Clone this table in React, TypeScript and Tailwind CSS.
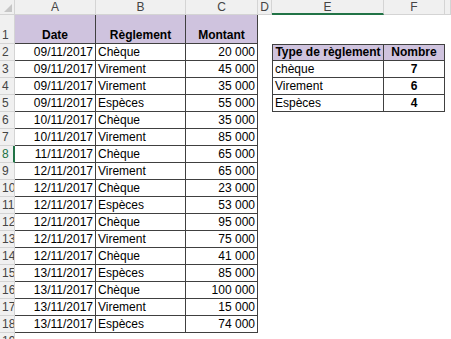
import React from "react";

const rows: [string, string, string][] = [
  ["09/11/2017", "Chèque", "20 000"],
  ["09/11/2017", "Virement", "45 000"],
  ["09/11/2017", "Virement", "35 000"],
  ["09/11/2017", "Espèces", "55 000"],
  ["10/11/2017", "Chèque", "35 000"],
  ["10/11/2017", "Virement", "85 000"],
  ["11/11/2017", "Chèque", "65 000"],
  ["12/11/2017", "Virement", "65 000"],
  ["12/11/2017", "Chèque", "23 000"],
  ["12/11/2017", "Espèces", "53 000"],
  ["12/11/2017", "Chèque", "95 000"],
  ["12/11/2017", "Virement", "75 000"],
  ["12/11/2017", "Chèque", "41 000"],
  ["13/11/2017", "Espèces", "85 000"],
  ["13/11/2017", "Chèque", "100 000"],
  ["13/11/2017", "Virement", "15 000"],
  ["13/11/2017", "Espèces", "74 000"],
];

const summary: [string, string][] = [
  ["chèque", "7"],
  ["Virement", "6"],
  ["Espèces", "4"],
];

const cols = ["A", "B", "C", "D", "E", "F", ""];

const hdr = "bg-[#f0f0f0] border-r border-b border-[#d4d4d4] text-[#444] text-[12px]";
const cell = "flex items-end pb-[1px] leading-[14px] whitespace-nowrap overflow-hidden";
const dark = "border-[#404040]";

function RowHead({ n }: { n: number }) {
  const active = n === 8;
  return (
    <div
      className={`${hdr} ${cell} pl-[2px] text-[11px] ${
        active ? "text-[#217346] border-r-2 border-r-[#217346]" : ""
      }`}
    >
      {n}
    </div>
  );
}

export default function App() {
  const body: React.ReactNode[] = [];

  for (let r = 1; r <= 18; r++) {
    body.push(<RowHead key={`h${r}`} n={r} />);

    // A..C
    if (r === 1) {
      ["Date", "Règlement", "Montant"].forEach((t) =>
        body.push(
          <div
            key={`t${t}`}
            className={`${cell} justify-center items-center pt-[4px] bg-[#cfc3de] font-bold border-r border-b ${dark}`}
          >
            {t}
          </div>
        )
      );
    } else {
      const [d, m, v] = rows[r - 2];
      body.push(
        <div key={`a${r}`} className={`${cell} justify-end pr-[2px] border-r border-b ${dark}`}>
          {d}
        </div>,
        <div key={`b${r}`} className={`${cell} pl-[2px] border-r border-b ${dark}`}>
          {m}
        </div>,
        <div key={`c${r}`} className={`${cell} justify-end pr-[2px] border-r border-b ${dark}`}>
          {v}
        </div>
      );
    }

    // D
    body.push(<div key={`d${r}`} />);

    // E, F
    if (r === 2) {
      body.push(
        <div
          key="e2"
          className={`${cell} justify-center bg-[#cfc3de] font-bold border ${dark}`}
        >
          Type de règlement
        </div>,
        <div
          key="f2"
          className={`${cell} justify-center bg-[#cfc3de] font-bold border-t border-r border-b ${dark}`}
        >
          Nombre
        </div>
      );
    } else if (r >= 3 && r <= 5) {
      const [t, n] = summary[r - 3];
      body.push(
        <div key={`e${r}`} className={`${cell} pl-[2px] border-l border-r border-b ${dark}`}>
          {t}
        </div>,
        <div
          key={`f${r}`}
          className={`${cell} justify-center font-bold border-r border-b ${dark}`}
        >
          {n}
        </div>
      );
    } else {
      body.push(<div key={`e${r}`} />, <div key={`f${r}`} />);
    }

    body.push(<div key={`g${r}`} />);
  }

  return (
    <div className="w-[451px] h-[339px] overflow-hidden bg-white text-black text-[12px] font-['Liberation_Sans',Arial,sans-serif]">
      <div className="grid grid-cols-[15px_81px_90px_72px_14px_112px_61px_1fr] grid-rows-[15px_29px_repeat(18,17px)]">
        <div className={`${hdr} relative`}>
          <svg className="absolute right-[2px] bottom-[2px]" width="8" height="8" viewBox="0 0 8 8">
            <path d="M8 0 L8 8 L0 8 Z" fill="#c6c6c6" />
          </svg>
        </div>
        {cols.map((c) => (
          <div
            key={`col${c}`}
            className={`${hdr} flex items-center justify-center leading-none ${
              c === "E" ? "border-b-2 border-b-[#217346] text-[#3b5f46]" : ""
            }`}
          >
            {c}
          </div>
        ))}
        {body}
        <RowHead n={19} />
      </div>
    </div>
  );
}
